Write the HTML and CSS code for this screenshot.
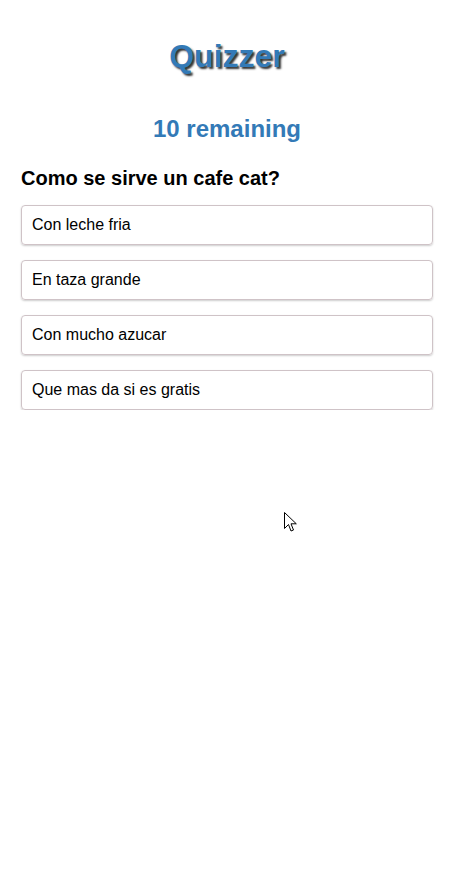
FILE: index.html
```html
<!DOCTYPE html>
<html>
<head>
<meta charset="utf-8">
<link rel="stylesheet" href="styles.css">
</head>
<body>
<div class="app">
  <h1 class="title">Quizzer</h1>
  <h2 class="remaining">10 remaining</h2>
  <h3 class="question">Como se sirve un cafe cat?</h3>
  <ul class="answers">
    <li class="answer">Con leche fria</li>
    <li class="answer">En taza grande</li>
    <li class="answer">Con mucho azucar</li>
    <li class="answer">Que mas da si es gratis</li>
  </ul>
</div>
<svg class="cursor" width="13" height="21" viewBox="0 0 13 21">
  <path d="M0.5 0.5 L0.5 16.5 L4.5 12.5 L7 19 L9.5 18 L7 11.8 L12.3 11.8 Z" fill="#fff" stroke="#000" stroke-width="1" stroke-linejoin="miter"/>
</svg>
</body>
</html>
```

FILE: styles.css
```css
html, body {
  margin: 0;
  padding: 0;
  background: #fff;
}
body {
  font-family: "Liberation Sans", Arial, sans-serif;
  color: #000;
}
.app {
  padding: 38px 33px 0 21px;
}
.title {
  margin: 0;
  text-align: center;
  font-size: 32px;
  font-weight: bold;
  line-height: 37px;
  color: #337ab7;
  text-shadow: 2px 2px 2px #333;
}
.remaining {
  margin: 40px 0 0;
  text-align: center;
  font-size: 24px;
  font-weight: bold;
  line-height: 28px;
  color: #337ab7;
}
.question {
  margin: 24px 0 0;
  font-size: 20px;
  font-weight: bold;
  line-height: 23px;
}
.answers {
  list-style: none;
  margin: 15px 0 0;
  padding: 0;
  display: flex;
  flex-direction: column;
  gap: 15px;
}
.answer {
  border: 1px solid #cfc3c7;
  border-radius: 4px;
  box-shadow: 0 1px 2px rgba(0, 0, 0, 0.2);
  padding: 10px 10px;
  font-size: 16px;
  line-height: 18px;
}
.cursor {
  position: absolute;
  left: 284px;
  top: 512px;
}
```
